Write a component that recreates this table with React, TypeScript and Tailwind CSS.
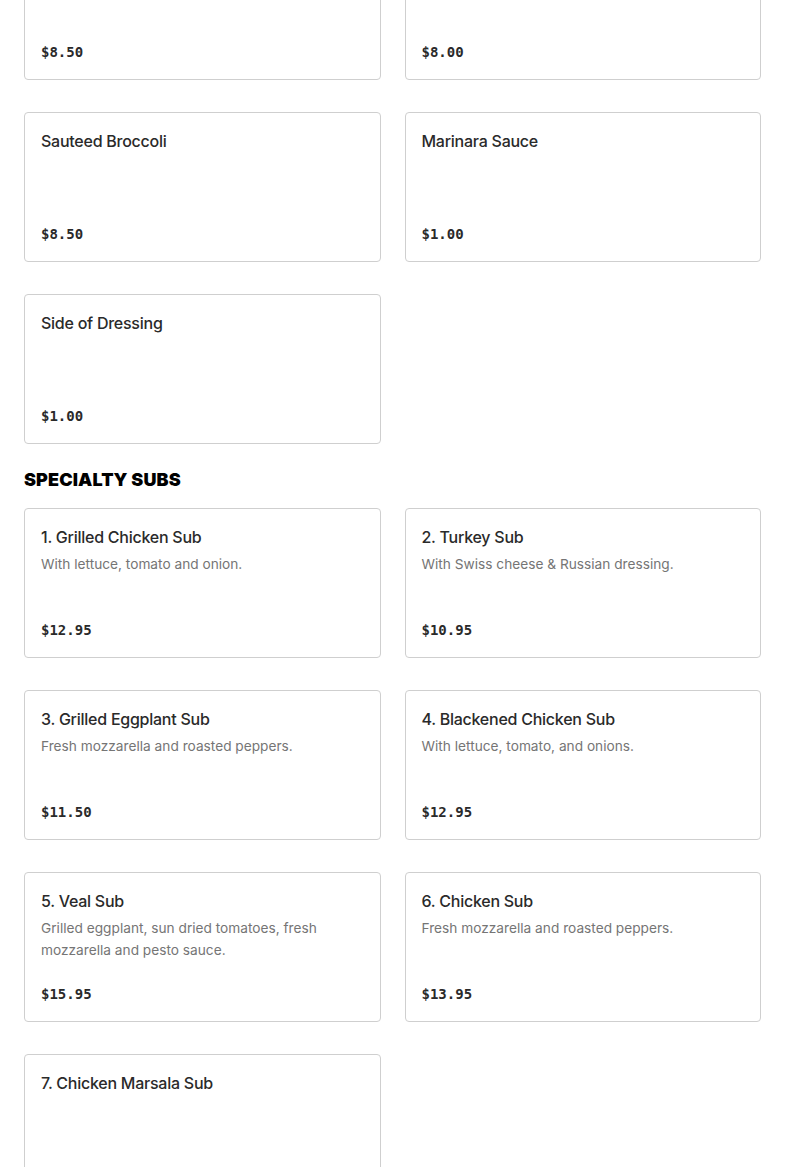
import React from "react";

type Item = { name: string; desc?: string; price: string };

const sides: Item[] = [
  { name: "Sauteed Spinach", price: "$8.50" },
  { name: "Sauteed Escarole", price: "$8.00" },
  { name: "Sauteed Broccoli", price: "$8.50" },
  { name: "Marinara Sauce", price: "$1.00" },
  { name: "Side of Dressing", price: "$1.00" },
];

const subs: Item[] = [
  { name: "1. Grilled Chicken Sub", desc: "With lettuce, tomato and onion.", price: "$12.95" },
  { name: "2. Turkey Sub", desc: "With Swiss cheese & Russian dressing.", price: "$10.95" },
  { name: "3. Grilled Eggplant Sub", desc: "Fresh mozzarella and roasted peppers.", price: "$11.50" },
  { name: "4. Blackened Chicken Sub", desc: "With lettuce, tomato, and onions.", price: "$12.95" },
  { name: "5. Veal Sub", desc: "Grilled eggplant, sun dried tomatoes, fresh mozzarella and pesto sauce.", price: "$15.95" },
  { name: "6. Chicken Sub", desc: "Fresh mozzarella and roasted peppers.", price: "$13.95" },
  { name: "7. Chicken Marsala Sub", price: "$13.95" },
];

function Card({ item }: { item: Item }) {
  return (
    <div className="h-[150px] rounded-[4px] border border-[#cfcfcf] bg-white px-4 pt-4 pb-[17px] flex flex-col justify-between">
      <div>
        <div className="font-['Inter',sans-serif] text-[16px] leading-[24px] font-medium text-[#2a2a2a] tracking-[-0.25px]">
          {item.name}
        </div>
        {item.desc && (
          <div className="mt-[4px] font-['Inter',sans-serif] text-[13.7px] leading-[22px] text-[#757575]">
            {item.desc}
          </div>
        )}
      </div>
      <div className="font-['DejaVu_Sans_Mono',monospace] text-[14px] leading-[20px] font-bold text-[#2a2a2a]">
        {item.price}
      </div>
    </div>
  );
}

export default function App() {
  return (
    <div className="w-[785px] h-[1167px] overflow-hidden bg-white">
      <div className="-mt-[70px] px-6">
        <div className="grid grid-cols-2 gap-x-6 gap-y-8">
          {sides.map((it) => (
            <Card key={it.name} item={it} />
          ))}
        </div>
        <h2 className="mt-6 mb-4 font-['Inter',sans-serif] text-[18px] leading-[24px] font-black text-black tracking-[0.1px]">
          SPECIALTY SUBS
        </h2>
        <div className="grid grid-cols-2 gap-x-6 gap-y-8">
          {subs.map((it) => (
            <Card key={it.name} item={it} />
          ))}
        </div>
      </div>
    </div>
  );
}
